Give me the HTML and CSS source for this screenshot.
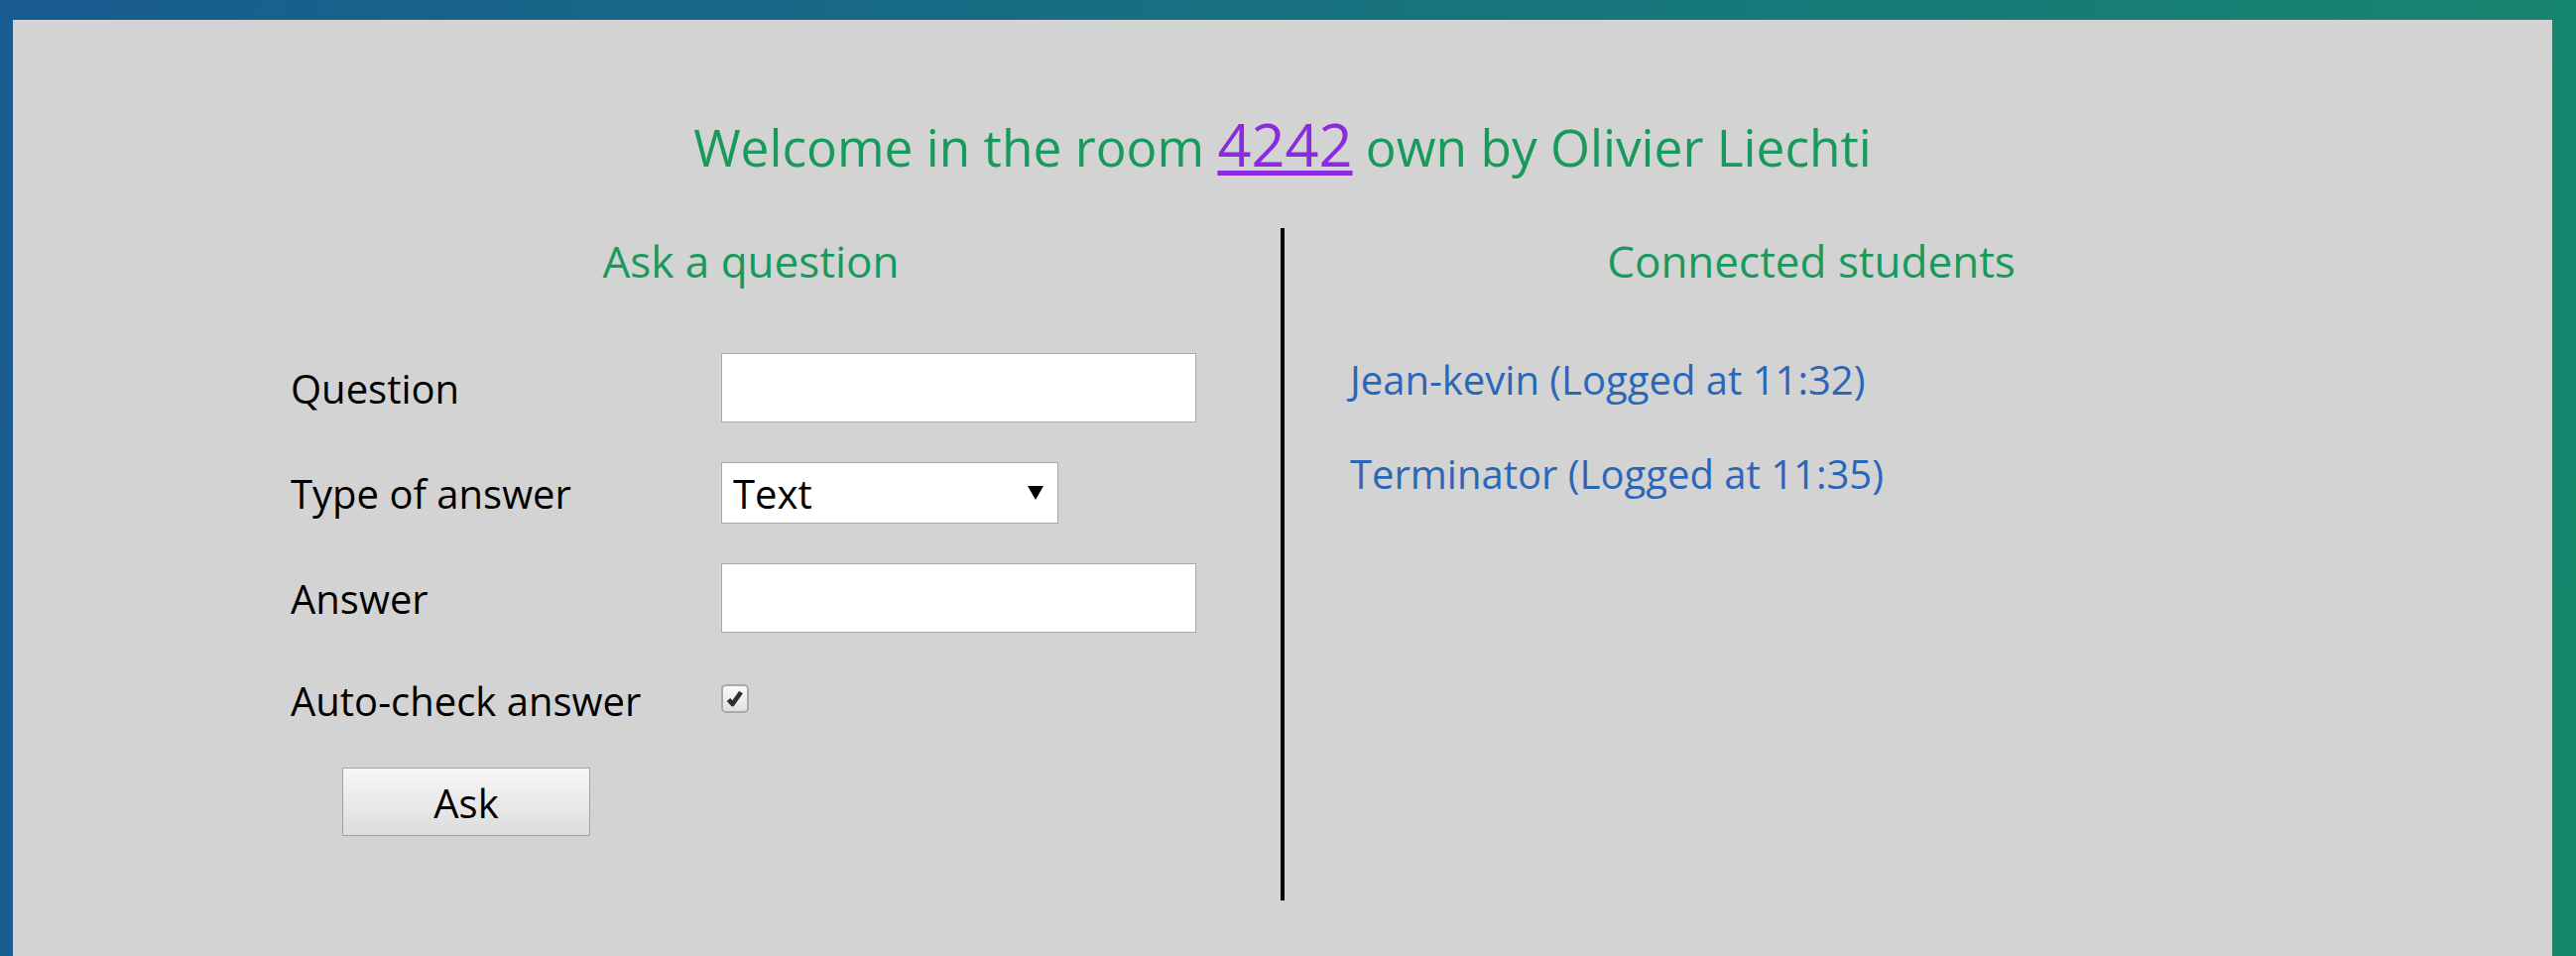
FILE: index.html
```html
<!DOCTYPE html>
<html lang="en">
<head>
<meta charset="utf-8">
<title>Room 4242</title>
<link rel="stylesheet" href="styles.css">
</head>
<body>
<main class="panel">
  <h1 class="title">Welcome in the room <a class="room-link" href="#">4242</a> own by Olivier Liechti</h1>
  <div class="columns">
    <section class="col col-left">
      <h2 class="col-title">Ask a question</h2>
      <form class="ask-form">
        <label class="label" for="q">Question</label>
        <input class="field" id="q" type="text">
        <label class="label" for="t">Type of answer</label>
        <div class="select-wrap">
          <select class="select" id="t"><option>Text</option></select>
          <span class="select-arrow"></span>
        </div>
        <label class="label" for="a">Answer</label>
        <input class="field" id="a" type="text">
        <span class="label">Auto-check answer</span>
        <span class="checkbox" role="checkbox" aria-checked="true">
          <svg width="23" height="23" viewBox="0 0 23 23"><path d="M4.5 12.5 L8.5 17 L17 5" fill="none" stroke="#2e2e2e" stroke-width="4.6" stroke-linejoin="round"/></svg>
        </span>
      </form>
      <button class="ask-btn" type="button">Ask</button>
    </section>
    <section class="col col-right">
      <h2 class="col-title">Connected students</h2>
      <ul class="students">
        <li class="student">Jean-kevin (Logged at 11:32)</li>
        <li class="student">Terminator (Logged at 11:35)</li>
      </ul>
    </section>
  </div>
</main>
</body>
</html>
```

FILE: styles.css
```css
html, body {
  margin: 0;
  padding: 0;
}
body {
  min-height: 964px;
  background: linear-gradient(97deg, #185b90 0%, #17727f 50%, #16876d 100%);
  font-family: "Open Sans", "DejaVu Sans", sans-serif;
  padding: 20px 24px 0 13px;
  box-sizing: border-box;
  overflow: hidden;
}
.panel {
  background: #d3d3d3;
  min-height: 960px;
  padding-top: 93px;
  box-sizing: border-box;
}
.title {
  margin: 0;
  text-align: center;
  font-weight: 400;
  font-size: 51.4px;
  line-height: 70px;
  color: #179a5b;
}
.room-link {
  font-size: 59.5px;
  line-height: 1;
  color: #8a2be2;
  text-decoration: underline;
  text-decoration-thickness: 5px;
  text-underline-offset: 4px;
}
.columns {
  width: 2140px;
  margin: 47px auto 0;
  display: grid;
  grid-template-columns: 1068px 4px 1062px;
  height: 678px;
}
.col-left {
  grid-column: 1;
  padding-left: 70px;
  border-right: 4px solid #000;
  grid-column-end: span 2;
}
.col-right {
  grid-column: 3;
}
.col-title {
  margin: 3px 0 0;
  font-weight: 400;
  font-size: 44px;
  line-height: 61px;
  color: #179a5b;
  text-align: center;
}
.col-left .col-title {
  margin-left: -70px;
}
.ask-form {
  margin-top: 62px;
  display: grid;
  grid-template-columns: 434px auto;
  row-gap: 40px;
  align-items: center;
  justify-items: start;
}
.label {
  font-size: 40px;
  line-height: 54px;
  padding-top: 2px;
  color: #000;
}
.field {
  box-sizing: border-box;
  width: 479px;
  height: 70px;
  border: 1px solid #a9a9a9;
  background: #fff;
  margin: 0;
  font-size: 40px;
  font-family: inherit;
}
.select-wrap {
  position: relative;
  width: 340px;
  height: 62px;
}
.select {
  appearance: none;
  -webkit-appearance: none;
  box-sizing: border-box;
  width: 340px;
  height: 62px;
  border: 1px solid #a9a9a9;
  border-radius: 0;
  background: #fff;
  font-family: inherit;
  font-size: 40px;
  color: #000;
  padding: 0 0 0 11px;
  margin: 0;
}
.select-arrow {
  position: absolute;
  left: 309px;
  top: 24px;
  width: 0;
  height: 0;
  border-left: 8px solid transparent;
  border-right: 8px solid transparent;
  border-top: 14px solid #000;
  pointer-events: none;
}
.checkbox {
  box-sizing: border-box;
  width: 28px;
  height: 29px;
  border: 2px solid #aaaaaa;
  border-radius: 5px;
  background: linear-gradient(#fbfbfb, #e0e0e0);
  display: flex;
  align-items: center;
  justify-content: center;
  margin-top: -3px;
}
.checkbox svg {
  display: block;
}
.ask-btn {
  display: block;
  box-sizing: border-box;
  margin: 40px 0 0 52px;
  width: 250px;
  height: 69px;
  border: 1px solid #a3a3a3;
  border-radius: 0;
  background: linear-gradient(#f7f7f7, #dcdcdc);
  font-family: inherit;
  font-size: 40px;
  color: #000;
  padding: 2px 0 0;
}
.students {
  list-style: none;
  margin: 62px 0 0;
  padding: 0 0 0 66px;
  display: flex;
  flex-direction: column;
  gap: 41px;
}
.student {
  font-size: 40px;
  line-height: 54px;
  color: #2a67b9;
}
```
